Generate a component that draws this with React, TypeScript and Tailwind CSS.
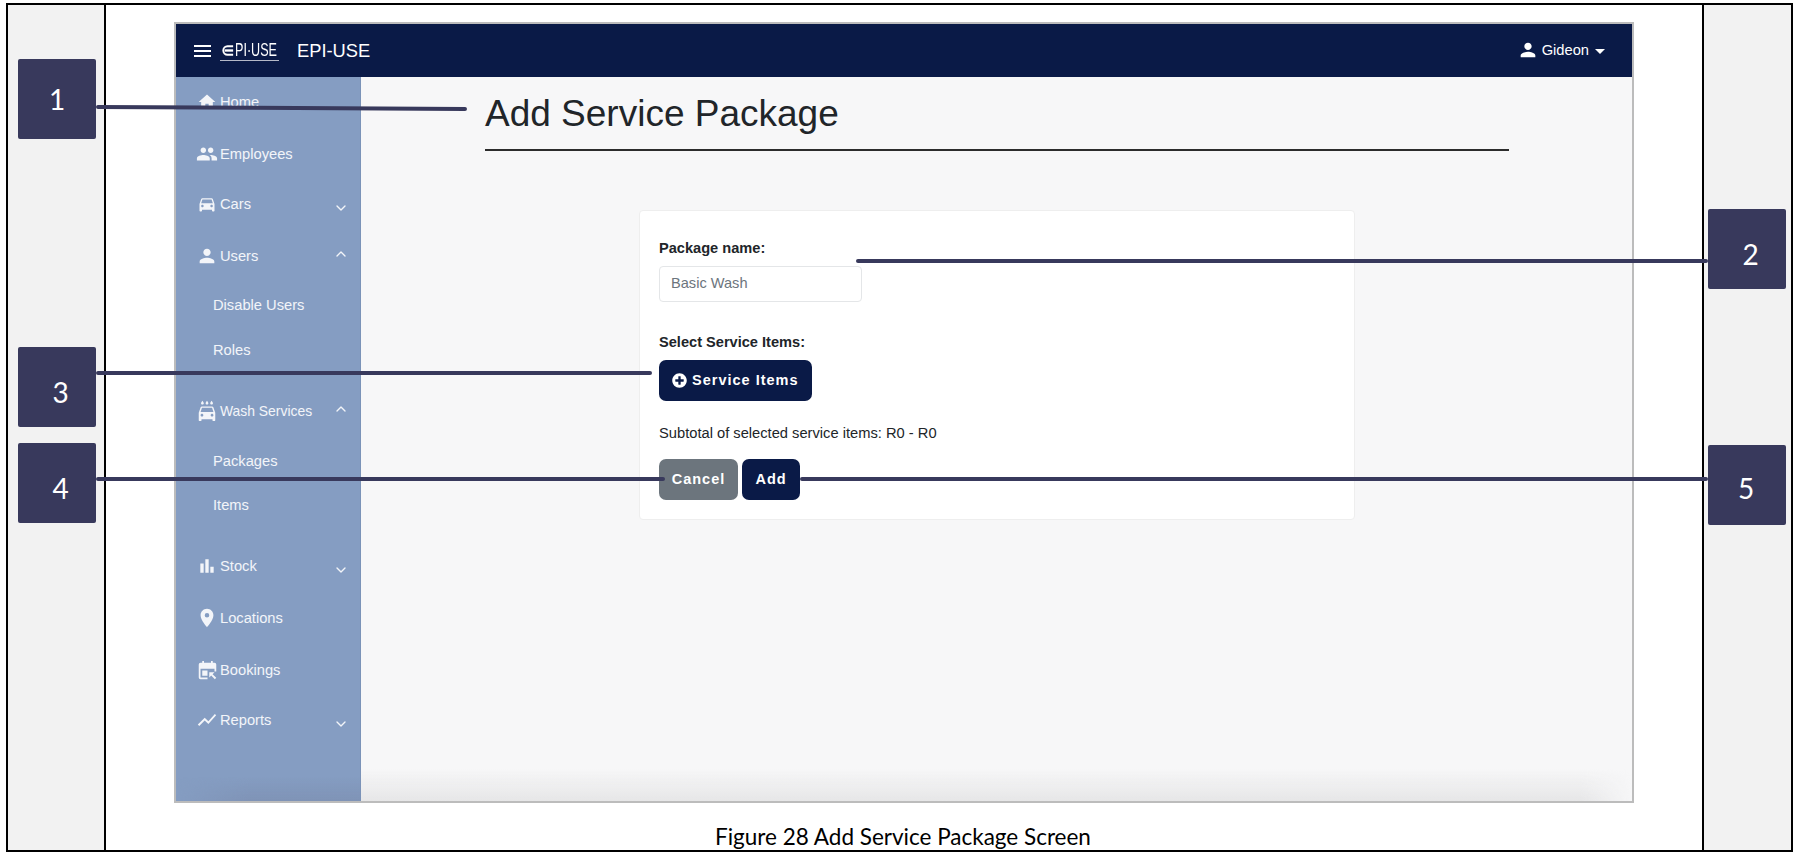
import { ChevronDown, ChevronUp } from "lucide-react";
import type { ReactNode } from "react";
import {
  MdBarChart,
  MdDirectionsCar,
  MdHome,
  MdLocalCarWash,
  MdLocationOn,
  MdPeople,
  MdPerson,
  MdShowChart,
} from "react-icons/md";
import { FaPlusCircle } from "react-icons/fa";

const BookingIcon = () => (
  <svg viewBox="0 0 24 24" className="size-[21px]" fill="currentColor">
    <path d="M6 1h2v2h8V1h2v2h2a2 2 0 0 1 2 2v8h-2v-3H4v10h8v2H4a2 2 0 0 1-2-2V5a2 2 0 0 1 2-2h2V1z" />
    <path d="M6 12h6v6H6z" />
    <path d="M14 14h6l-2.2 2.2L22 20.4 20.4 22l-4.2-4.2L14 20z" />
  </svg>
);

const NavItem = ({
  icon,
  label,
  chevron,
  className,
  labelClassName = "text-[14.7px]",
}: {
  icon: ReactNode;
  label: string;
  chevron?: "up" | "down";
  className: string;
  labelClassName?: string;
}) => (
  <div className={`flex items-center pl-[20px] pr-[11px] text-white/90 ${className}`}>
    <span className="flex w-[22px] shrink-0 justify-center">{icon}</span>
    <span className={`ml-[2px] flex-1 ${labelClassName}`}>{label}</span>
    {chevron === "down" && <ChevronDown className="mt-[8px] size-[16px]" strokeWidth={2} />}
    {chevron === "up" && <ChevronUp className="mb-[4px] size-[16px]" strokeWidth={2} />}
  </div>
);

const SubItem = ({ label, className }: { label: string; className: string }) => (
  <div className={`pl-[37px] text-[14.7px] text-white/90 ${className}`}>{label}</div>
);

// Numbered callout box in the document margins
const Callout = ({ n, className }: { n: number; className: string }) => (
  <div
    className={`absolute flex h-[80px] w-[78px] items-center justify-center rounded-[2px] bg-[#38395c] text-[28px] text-white ${className}`}
  >
    {n}
  </div>
);

const Leader = ({ className }: { className: string }) => (
  <div className={`absolute h-[4px] rounded-full bg-[#38395c] ${className}`} />
);

export default function App() {
  return (
    <div className="relative h-[852px] w-[1796px] overflow-hidden bg-white font-['Liberation_Sans',sans-serif]">
      <div className="ml-[6px] mr-[3px] mt-[3px] flex h-[849px] border-x-2 border-y-2 border-black bg-white">
        <div className="w-[98px] shrink-0 border-r-2 border-black bg-[#f2f2f2]" />

        <div className="flex flex-1 flex-col items-start pl-[68px] pt-[17px]">
          <div className="flex h-[784px] w-[1460px] flex-col border-2 border-[#bcbcbc]">
            <header className="flex h-[53px] shrink-0 items-center bg-[#0a1a47] pl-[18px] pr-[27px] text-white">
              <div className="flex h-[12px] w-[17px] flex-col justify-between">
                <div className="h-[2px] bg-white" />
                <div className="h-[2px] bg-white" />
                <div className="h-[2px] bg-white" />
              </div>
              <div className="ml-[9px] flex h-[20px] w-[59px] items-center border-b border-white/70 text-[18px] leading-none">
                <svg viewBox="0 0 16 16" className="size-[15px] shrink-0" fill="none" stroke="white" strokeWidth="2">
                  <path d="M14 3.5H8a4.5 4.5 0 0 0 0 9h6" />
                  <path d="M5 8h9" strokeWidth="2.5" />
                </svg>
                <span className="inline-block origin-left scale-x-[0.7] whitespace-nowrap font-['Liberation_Sans_Narrow','Liberation_Sans',sans-serif]">
                  PI·USE
                </span>
              </div>
              <span className="ml-[18px] text-[18.3px]">EPI-USE</span>
              <div className="ml-auto flex items-center text-[14.7px]">
                <MdPerson className="size-[22px]" />
                <span className="ml-[3px]">Gideon</span>
                <span className="ml-[6px] mt-[2px] h-0 w-0 border-x-[5px] border-t-[5px] border-x-transparent border-t-white" />
              </div>
            </header>

            <div className="flex min-h-0 flex-1">
              <aside className="relative w-[185px] shrink-0 overflow-hidden border-r border-[#7b93b8] bg-[#859dc2] pt-[2px]">
                <NavItem icon={<MdHome className="size-[20px]" />} label="Home" className="h-[46px]" />
                <NavItem icon={<MdPeople className="size-[22px]" />} label="Employees" className="mt-[6px] h-[46px]" />
                <NavItem icon={<MdDirectionsCar className="size-[20px]" />} label="Cars" chevron="down" className="mt-[4px] h-[46px]" />
                <NavItem icon={<MdPerson className="size-[22px]" />} label="Users" chevron="up" className="mt-[6px] h-[46px]" />
                <SubItem label="Disable Users" className="mt-[15px]" />
                <SubItem label="Roles" className="mt-[23px]" />
                <NavItem
                  icon={<MdLocalCarWash className="size-[22px]" />}
                  label="Wash Services"
                  labelClassName="text-[13.9px]"
                  chevron="up"
                  className="mt-[27px] h-[46px]"
                />
                <SubItem label="Packages" className="mt-[16px]" />
                <SubItem label="Items" className="mt-[22px]" />
                <NavItem icon={<MdBarChart className="size-[20px]" />} label="Stock" chevron="down" className="mt-[27px] h-[46px]" />
                <NavItem icon={<MdLocationOn className="size-[22px]" />} label="Locations" className="mt-[6px] h-[46px]" />
                <NavItem icon={<BookingIcon />} label="Bookings" className="mt-[6px] h-[46px]" />
                <NavItem icon={<MdShowChart className="size-[22px]" />} label="Reports" chevron="down" className="mt-[4px] h-[46px]" />
                <div className="absolute inset-x-0 bottom-0 h-[24px] bg-gradient-to-b from-transparent to-[#7f93b6] [mask-image:linear-gradient(to_right,transparent,black_40%)]" />
              </aside>

              <main className="relative flex-1 bg-[#f7f7f8] text-[#212529]">
                <div className="ml-[124px] w-[1024px]">
                  <h1 className="pt-[15px] text-[37px] leading-[44px]">Add Service Package</h1>
                  <div className="mt-[13px] h-[2px] bg-[#2c2c2c]" />
                </div>

                <div className="ml-[278px] mt-[59px] h-[310px] w-[716px] rounded-[4px] border border-[#eeeeee] bg-white px-[19px] pt-[28px]">
                  <div className="text-[14.6px] font-bold leading-[18px]">Package name:</div>
                  <div className="mt-[9px] flex h-[36px] w-[203px] items-center rounded-[4px] border border-[#e4e6e8] bg-white pl-[11px] text-[14.6px] text-[#6c757d]">
                    Basic Wash
                  </div>
                  <div className="mt-[31px] text-[14.6px] font-bold leading-[18px]">Select Service Items:</div>
                  <button
                    type="button"
                    className="mt-[9px] flex h-[41px] w-[153px] items-center rounded-[7px] bg-[#0a1a47] pl-[13px] text-[14.5px] font-bold tracking-[1px] text-white"
                  >
                    <FaPlusCircle className="mr-[5px] size-[15px]" />
                    Service Items
                  </button>
                  <div className="mt-[23px] text-[14.7px] leading-[18px]">Subtotal of selected service items: R0 - R0</div>
                  <div className="mt-[17px] flex gap-[4px]">
                    <button
                      type="button"
                      className="flex h-[41px] w-[79px] items-center justify-center rounded-[7px] bg-[#6c757d] text-[14.5px] font-bold tracking-[1px] text-white"
                    >
                      Cancel
                    </button>
                    <button
                      type="button"
                      className="flex h-[41px] w-[58px] items-center justify-center rounded-[7px] bg-[#0a1a47] text-[14.5px] font-bold tracking-[1px] text-white"
                    >
                      Add
                    </button>
                  </div>
                </div>
                <div className="absolute inset-x-0 bottom-0 h-[32px] bg-gradient-to-b from-transparent to-[#e6e6e7] [mask-image:linear-gradient(to_right,black_96%,transparent)]" />
              </main>
            </div>
          </div>
          <div className="ml-[541px] mt-[21px] font-['Lato',sans-serif] text-[22.5px] leading-[26px] text-black">
            Figure 28 Add Service Package Screen
          </div>
        </div>

        <div className="w-[89px] shrink-0 border-l-2 border-black bg-[#f2f2f2]" />
      </div>

      <div className="font-['Lato',sans-serif]">
        <Callout n={1} className="left-[18px] top-[59px]" />
        <Callout n={2} className="left-[1708px] top-[209px] pl-[7px] pt-[9px]" />
        <Callout n={3} className="left-[18px] top-[347px] pl-[7px] pt-[9px]" />
        <Callout n={4} className="left-[18px] top-[443px] pl-[7px] pt-[9px]" />
        <Callout n={5} className="left-[1708px] top-[445px] pr-[2px] pt-[6px]" />
      </div>

      <Leader className="left-[96px] top-[106px] w-[371px] rotate-[0.3deg]" />
      <Leader className="left-[856px] top-[259px] w-[852px]" />
      <Leader className="left-[96px] top-[371px] w-[556px]" />
      <Leader className="left-[96px] top-[477px] w-[569px]" />
      <Leader className="left-[800px] top-[477px] w-[908px]" />
    </div>
  );
}
